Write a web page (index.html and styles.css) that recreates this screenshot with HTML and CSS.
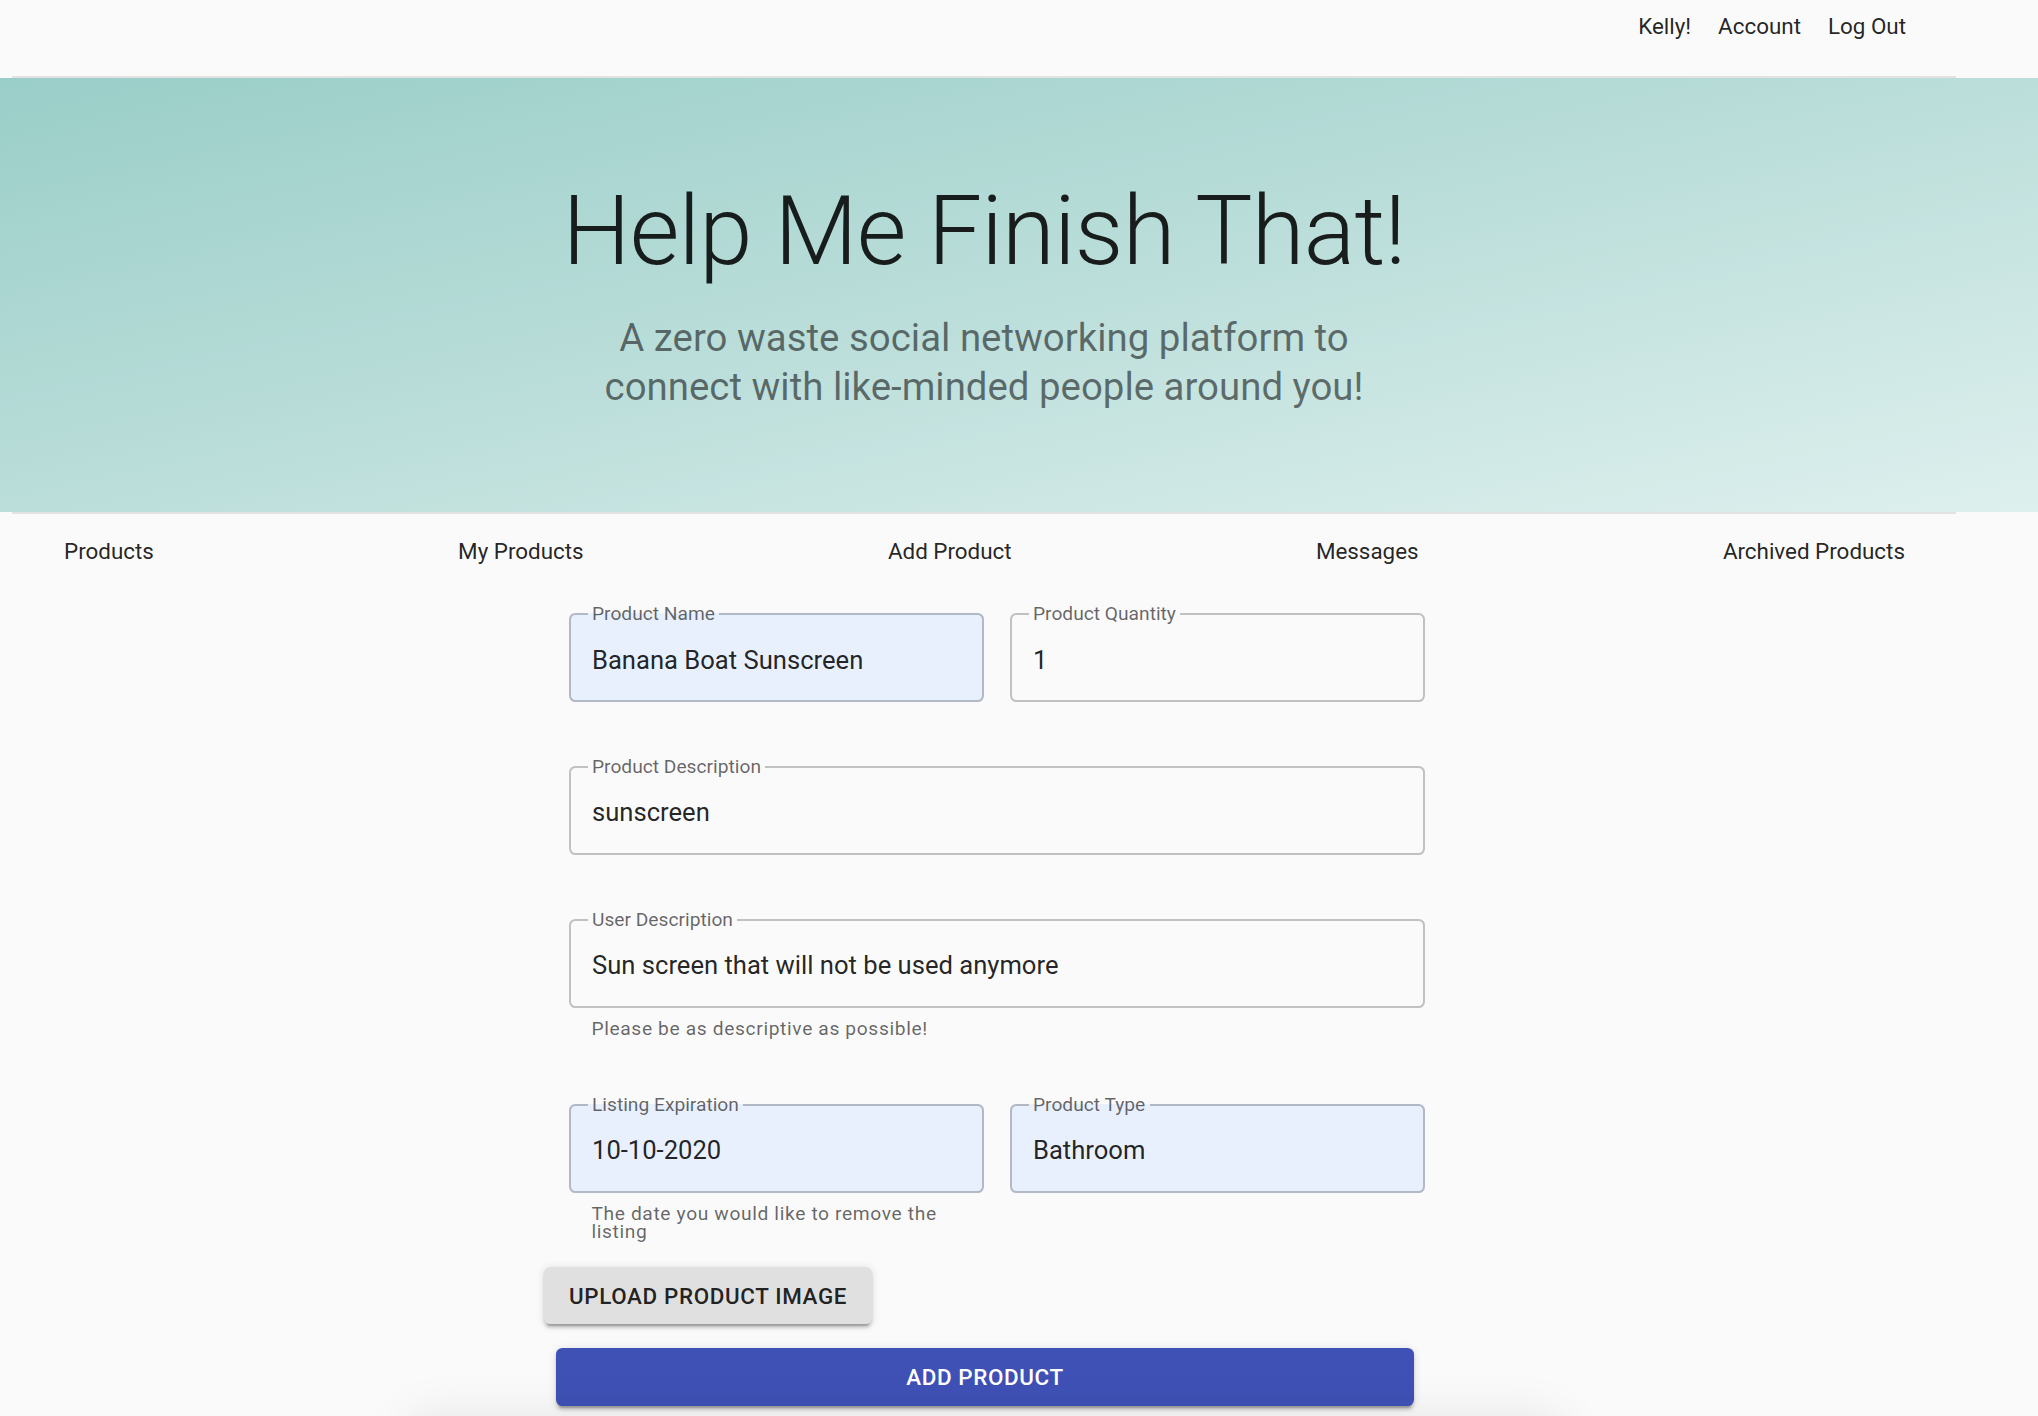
FILE: index.html
```html
<!DOCTYPE html>
<html lang="en">
<head>
<meta charset="utf-8">
<title>Help Me Finish That!</title>
<link rel="stylesheet" href="styles.css">
</head>
<body>
<div class="page">
  <header class="topbar">
    <span class="top-link">Kelly!</span>
    <span class="top-link">Account</span>
    <span class="top-link">Log Out</span>
  </header>
  <div class="hero-frame">
    <section class="hero">
      <h1 class="title">Help Me Finish That!</h1>
      <p class="subtitle">A zero waste social networking platform to<br>connect with like-minded people around you!</p>
    </section>
  </div>
  <nav class="nav">
    <span>Products</span>
    <span>My Products</span>
    <span>Add Product</span>
    <span>Messages</span>
    <span>Archived Products</span>
  </nav>
  <form class="form">
    <div class="row two">
      <fieldset class="field filled"><legend>Product Name</legend><div class="value">Banana Boat Sunscreen</div></fieldset>
      <fieldset class="field"><legend>Product Quantity</legend><div class="value">1</div></fieldset>
    </div>
    <div class="row">
      <fieldset class="field"><legend>Product Description</legend><div class="value">sunscreen</div></fieldset>
    </div>
    <div class="row with-helper">
      <fieldset class="field"><legend>User Description</legend><div class="value">Sun screen that will not be used anymore</div></fieldset>
      <p class="helper">Please be as descriptive as possible!</p>
    </div>
    <div class="row two last">
      <div class="col">
        <fieldset class="field filled"><legend>Listing Expiration</legend><div class="value">10-10-2020</div></fieldset>
        <p class="helper">The date you would like to remove the listing</p>
      </div>
      <div class="col">
        <fieldset class="field filled"><legend>Product Type</legend><div class="value">Bathroom</div></fieldset>
      </div>
    </div>
    <button type="button" class="btn upload">Upload Product Image</button>
    <button type="button" class="btn primary">Add Product</button>
    <div class="footer-shade"></div>
  </form>
</div>
</body>
</html>
```

FILE: styles.css
```css
html, body {
  margin: 0;
  padding: 0;
}

body {
  background: #fafafa;
  font-family: Roboto, "Liberation Sans", Arial, sans-serif;
  color: rgba(0, 0, 0, 0.87);
  overflow: hidden;
}

.page {
  margin-left: 12px;
  width: 1944px;
}

.topbar {
  height: 63px;
  padding: 13px 50px 0 0;
  border-bottom: 2px solid #e2e2e2;
  display: flex;
  justify-content: flex-end;
  gap: 27px;
  font-size: 22.4px;
  line-height: 26px;
}

.hero-frame {
  border-bottom: 2px solid #e2e2e2;
}

.hero {
  margin-left: -12px;
  width: 2038px;
  height: 434px;
  box-sizing: border-box;
  padding: 95.5px 82px 0 12px;
  background: linear-gradient(to bottom right, #9acec8 0%, #bbdeda 50%, #def0ee 100%);
  text-align: center;
}

.title {
  margin: 0;
  font-size: 96px;
  font-weight: 300;
  line-height: 1.2;
  letter-spacing: -0.00833em;
  color: rgba(0, 0, 0, 0.87);
}

.subtitle {
  margin: 24.5px 0 0;
  font-size: 38.4px;
  line-height: 49px;
  font-weight: 400;
  color: rgba(0, 0, 0, 0.54);
}

.nav {
  display: flex;
  justify-content: space-between;
  padding: 24px 51px 0 52px;
  font-size: 22.4px;
  line-height: 26px;
}

.form {
  width: 856px;
  margin: 39px 0 0 557px;
}

.row {
  margin-bottom: 53.5px;
}

.row.with-helper {
  margin-bottom: 56px;
}

.row.two {
  display: grid;
  grid-template-columns: 1fr 1fr;
  column-gap: 26px;
}

.row.last {
  margin-bottom: 26.5px;
}

.col {
  min-width: 0;
}

.field {
  display: block;
  margin: 0;
  min-width: 0;
  padding: 16.5px 21px 22.2px;
  border: 2px solid #c1c1c1;
  border-radius: 6.4px;
  background: transparent;
}

.field.filled {
  background: #e8f0fe;
  border-color: #b3b9c4;
}

.field legend {
  margin-left: -4.5px;
  padding: 0 4.5px;
  font-size: 19.2px;
  line-height: 22px;
  color: rgba(0, 0, 0, 0.6);
}

.value {
  font-size: 25.6px;
  line-height: 36.8px;
  height: 36.8px;
  color: rgba(0, 0, 0, 0.87);
  white-space: nowrap;
}

.helper {
  margin: 11.5px 22.4px 0;
  font-size: 19.2px;
  line-height: 18px;
  letter-spacing: 0.64px;
  color: rgba(0, 0, 0, 0.6);
}

.btn {
  display: flex;
  align-items: center;
  border: 0;
  border-radius: 6.4px;
  font-family: Roboto, "Liberation Sans", Arial, sans-serif;
  font-size: 22.4px;
  font-weight: 500;
  letter-spacing: 0.64px;
  text-transform: uppercase;
  box-shadow: 0 4.8px 1.6px -3.2px rgba(0, 0, 0, 0.2), 0 3.2px 3.2px 0 rgba(0, 0, 0, 0.14), 0 1.6px 8px 0 rgba(0, 0, 0, 0.12);
  cursor: pointer;
}

.btn.upload {
  margin-left: -25px;
  width: 328px;
  height: 57px;
  padding: 0 0 0 25px;
  background: #e0e0e0;
  color: rgba(0, 0, 0, 0.87);
}

.btn.primary {
  margin: 24px 0 0 -13px;
  width: 858px;
  height: 58px;
  justify-content: center;
  background: #3f51b5;
  color: #ffffff;
}

.footer-shade {
  margin: 30px 0 0 -149px;
  width: 1130px;
  height: 60px;
  background: #f2f2f2;
  box-shadow: 0 -6px 50px 10px rgba(0, 0, 0, 0.1);
}
```
